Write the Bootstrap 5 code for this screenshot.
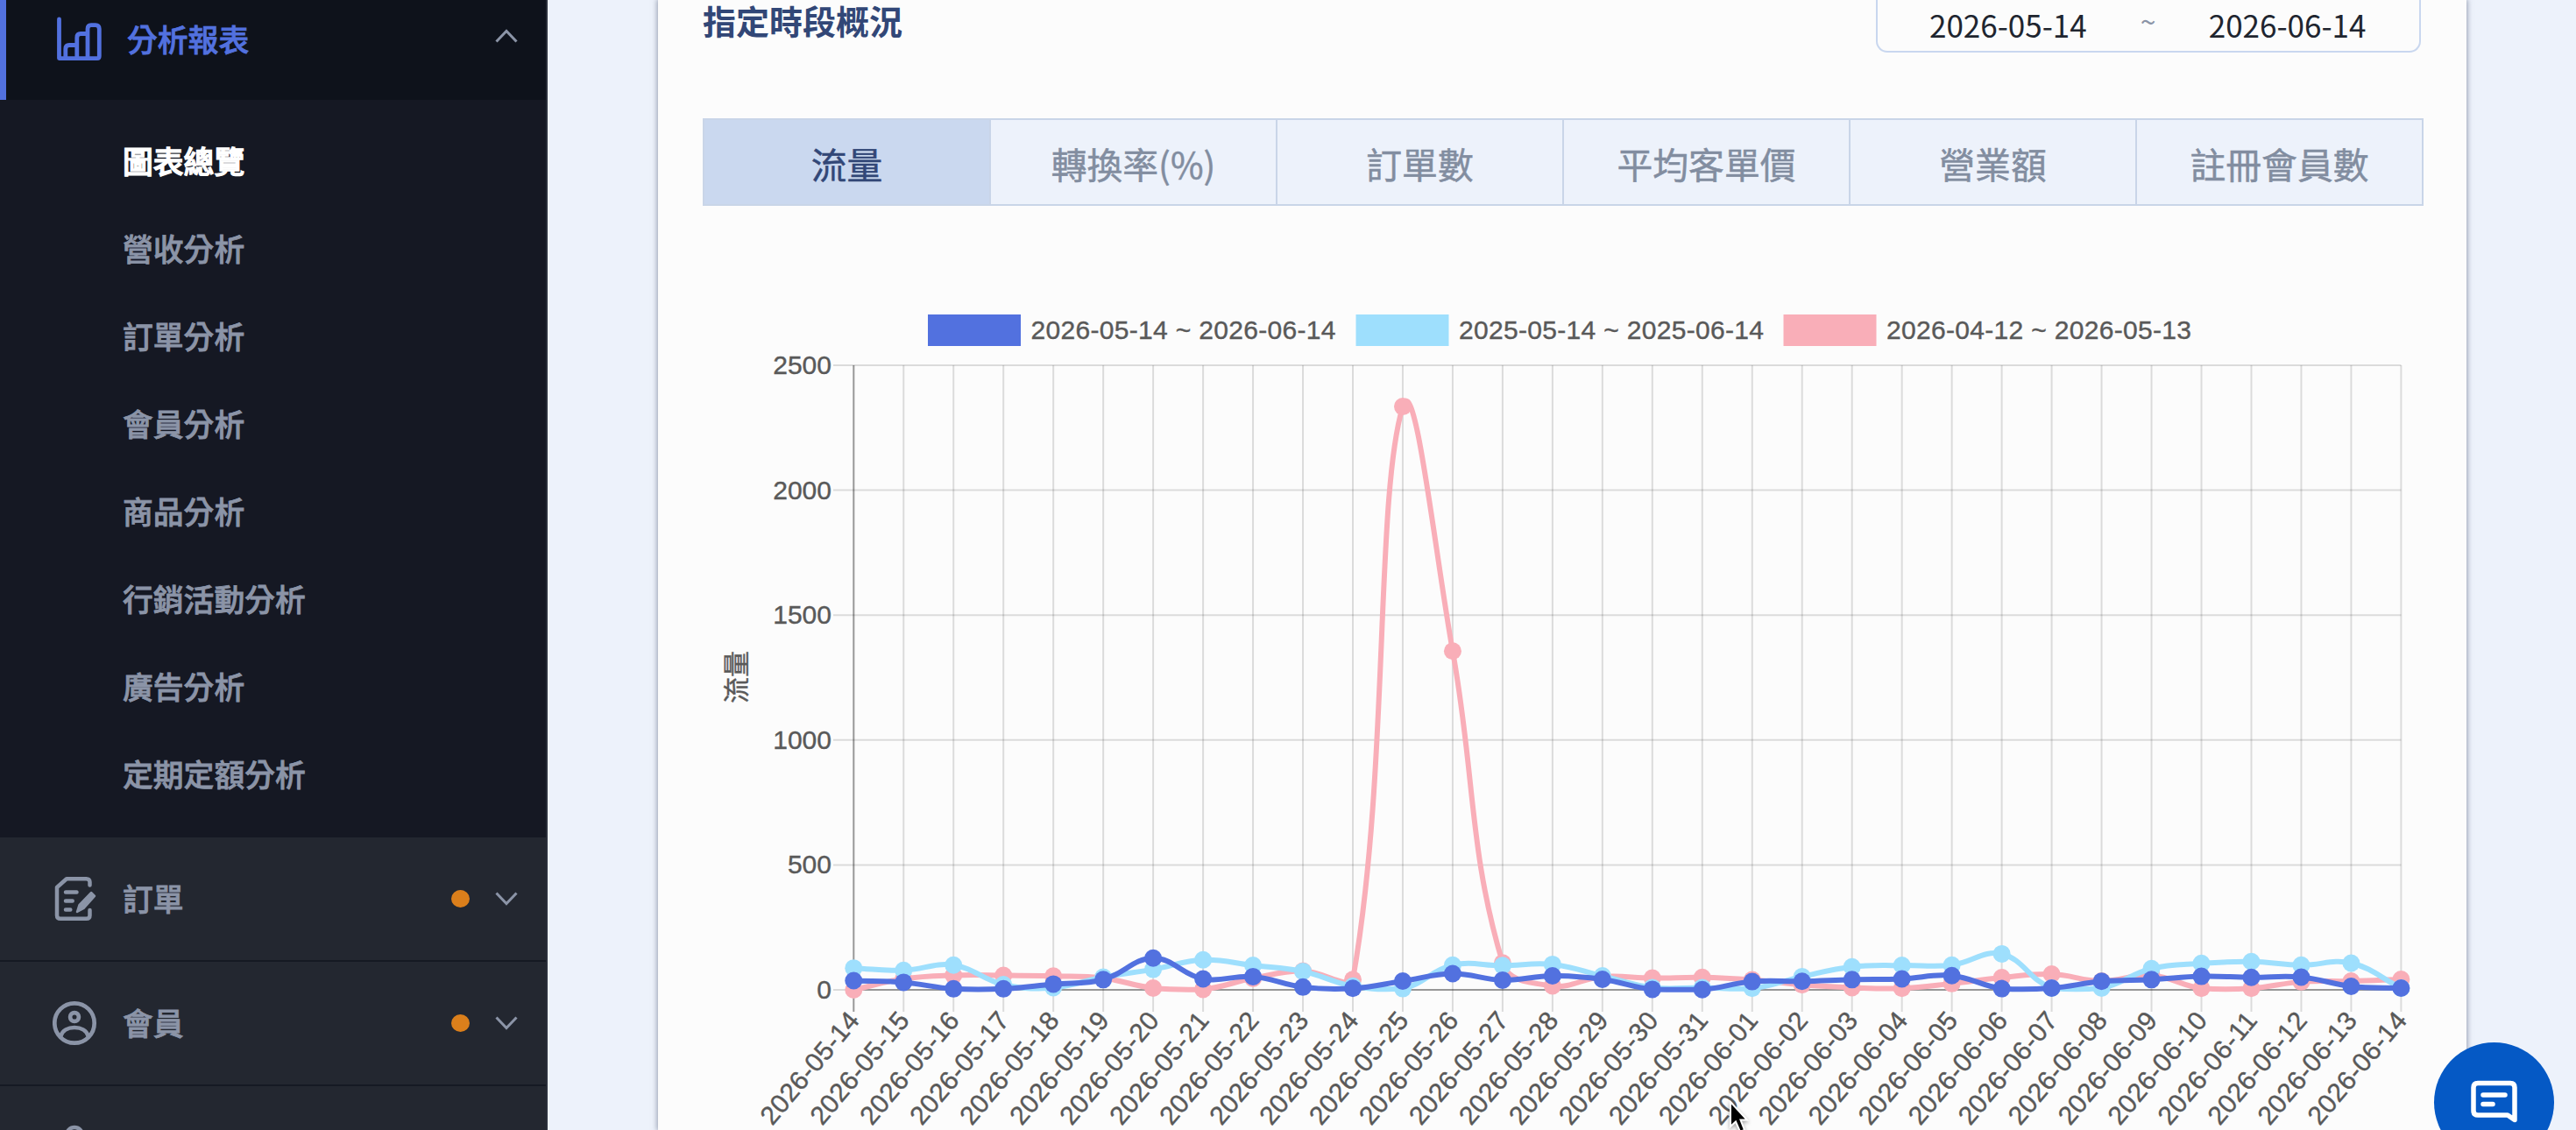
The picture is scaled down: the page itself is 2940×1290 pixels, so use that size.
<!DOCTYPE html>
<html lang="zh-Hant">
<head>
<meta charset="utf-8">
<title>圖表總覽</title>
<link href="https://cdn.jsdelivr.net/npm/bootstrap@5.3.0/dist/css/bootstrap.min.css" rel="stylesheet">
<style>
html,body{height:1290px;overflow:hidden}
body{background:#edf2fb;font-family:"Noto Sans CJK TC","Noto Sans",sans-serif;margin:0}
.app-frame{height:1290px}
.side{width:625px;background:#232730;border-right:2px solid #2b303b;color:#8b94a7;font-size:34.8px;font-weight:500;line-height:50px;-webkit-text-stroke:.8px currentColor}
.side svg{display:block}
.side-open{height:114px;background:#0e121b;border-left:7px solid #5271df;color:#5271df;padding:0 32px 24px 57px}
.side-open .txt{margin-left:29px;padding-bottom:3px}
.side-sub{height:842px;background:#151823;padding:44px 0 0 140px}
.side-sub a{color:#8b94a7;height:50px;margin-bottom:50px;text-decoration:none;display:block}
.side-sub a.on{color:#fff;-webkit-text-stroke-width:1.3px}
.side-item{height:142px;border-bottom:2px solid #151923;padding:0 32px 0 60px}
.side-item.last{padding-top:44px}
.side-item .txt{margin-left:29px;padding-bottom:2px}
.dot{width:21px;height:20px;background:#db7f1b;margin-right:29px}
.panel{margin-left:126px;width:2064px;height:1290px;background:#fcfcfc;box-shadow:0 0 6px 1px rgba(90,100,125,.6);padding:0 49px 0 51px}
.panel-head{height:61px}
.ttl{font-size:38px;font-weight:700;color:#324777;line-height:46px}
.range{width:622px;height:60px;margin-right:3px;border:2px solid #c9d7ef;border-top:0;border-radius:0 0 13px 13px;font-size:35px;color:#20252f;line-height:46px;padding:5px 0 0 59px}
.range .tl{width:139px;color:#8b94a7;font-size:32px;line-height:36px;padding-left:1px}
.tabs6{margin-top:74px;height:100px;border:2px solid #c9d5e8;background:#c9d5e8;gap:2px;font-size:40.8px;color:#828da0;-webkit-text-stroke:.5px currentColor}
.tabs6 div{flex:1 1 0;background:#edf2fb;display:flex;align-items:center;justify-content:center;padding-top:4px}
.tabs6 div.on{background:#cad8ef;color:#324777}
.plot{margin:0 -51px;display:block}
.plot text{font-family:"Liberation Sans",Arial,sans-serif;font-size:30px;fill:#595959;stroke:#595959;stroke-width:.4px}
.plot text.cjk{font-family:"Noto Sans CJK TC",sans-serif}
.chat{right:25px;top:1190px;width:137px;height:137px;background:#0559c5}
.ptr{left:1972px;top:1255px;filter:drop-shadow(0 2px 2px rgba(0,0,0,.35))}
</style>
<script src="https://cdn.jsdelivr.net/npm/bootstrap@5.3.0/dist/js/bootstrap.bundle.min.js"></script>
</head>
<body>
<div class="app-frame d-flex overflow-hidden position-relative">
<nav class="side flex-shrink-0 overflow-hidden">
  <div class="side-open d-flex align-items-center">
    <svg width="52" height="52" viewBox="0 0 52 52" fill="none" stroke="currentColor" stroke-width="4.8" stroke-linejoin="round" stroke-linecap="round"><path d="M3.500 3V47.600H47Q49.300 47.600 49.300 45V14Q49.300 9.600 45 9.600H40Q36 9.600 36 14V47M36 19.500H28Q23.800 19.500 23.800 24V47M23.800 32.500H15Q10.800 32.500 10.800 37V47"/></svg>
    <span class="txt">分析報表</span>
    <svg class="ms-auto mb-2" width="26" height="16" viewBox="0 0 26 16" fill="none" stroke="#8b94a7" stroke-width="3"><path d="M1.500 14.500L13 2.500L24.500 14.500"/></svg>
  </div>
  <div class="side-sub">
    <a class="on">圖表總覽</a><a>營收分析</a><a>訂單分析</a><a>會員分析</a><a>商品分析</a><a>行銷活動分析</a><a>廣告分析</a><a>定期定額分析</a>
  </div>
  <div class="side-item d-flex align-items-center">
    <svg width="51" height="52" viewBox="0 0 51 52" fill="none" stroke="currentColor" stroke-width="4.500" stroke-linecap="round" stroke-linejoin="round"><path d="M42.500 10.500V7Q42.500 3.200 38.500 3.200H16L5 13V45Q5 48.800 9 48.800H38.500Q42.500 48.800 42.500 45V39M15 18.500H27.500M15 28.500H22.700M15 38.500H20.300"/><path d="M28 41L30.500 33L44 19L48 23L35.500 37Z" fill="currentColor" stroke-width="2.500"/></svg>
    <span class="txt">訂單</span><span class="dot rounded-circle ms-auto"></span>
    <svg width="26" height="16" viewBox="0 0 26 16" fill="none" stroke="currentColor" stroke-width="3"><path d="M1.500 1.500L13 13.500L24.500 1.500"/></svg>
  </div>
  <div class="side-item d-flex align-items-center">
    <svg width="51" height="52" viewBox="0 0 51 52" fill="none" stroke="currentColor" stroke-width="4.700"><circle cx="25" cy="26" r="22.700"/><circle cx="25" cy="19" r="4.900"/><path d="M9 41.500C11 34 18 31 25 31S39 34 41 41.500"/></svg>
    <span class="txt">會員</span><span class="dot rounded-circle ms-auto"></span>
    <svg width="26" height="16" viewBox="0 0 26 16" fill="none" stroke="currentColor" stroke-width="3"><path d="M1.500 1.500L13 13.500L24.500 1.500"/></svg>
  </div>
  <div class="side-item last d-flex align-items-start">
    <svg width="51" height="52" viewBox="0 1 51 52" fill="none" stroke="currentColor" stroke-width="4.500"><circle cx="25" cy="13" r="9"/></svg>
  </div>
</nav>
<main class="panel flex-shrink-0">
  <div class="panel-head d-flex justify-content-between">
    <div class="ttl">指定時段概況</div>
    <div class="range d-flex"><span>2026-05-14</span><span class="tl text-center">~</span><span>2026-06-14</span></div>
  </div>
  <div class="tabs6 d-flex"><div class="on">流量</div><div>轉換率(%)</div><div>訂單數</div><div>平均客單價</div><div>營業額</div><div>註冊會員數</div></div>
  <svg class="plot" id="plot" width="2064" height="1055" viewBox="751 235 2064 1055"></svg>
</main>
<div class="chat position-absolute rounded-circle">
  <svg class="d-block" width="137" height="137" viewBox="0 0 137 137" fill="none" stroke="#fff" stroke-width="5.500" stroke-linejoin="round" stroke-linecap="round"><path d="M50 46.500H87Q92 46.500 92 51.500V88.500L84 83H50Q45 83 45 78V51.500Q45 46.500 50 46.500Z"/><path d="M56 60H81M56 70.500H67"/></svg>
</div>
<svg class="ptr position-absolute" width="32" height="48" viewBox="0 0 32 48"><path d="M3 3V31L9 25.500L14 37L19 35L14.500 23.500H22Z" fill="#000" stroke="#fff" stroke-width="2"/></svg>
</div>
<script>
const X0=974.3,DX=56.97,Y0=1130,Y1=417,MAX=2500;
const toY=v=>Y0-v*(Y0-Y1)/MAX;
const series=[
 {c:'#5271df',n:'2026-05-14 ~ 2026-06-14',x:1059,v:[37,30,4,4,23,41,127,44,53,11,6,35,65,39,56,42,2,1,33,34,41,44,57,5,7,34,41,54,50,51,14,7]},
 {c:'#9edffd',n:'2025-05-14 ~ 2025-06-14',x:1547.5,v:[87,78,99,21,9,51,82,120,98,74,15,5,99,97,102,56,9,9,6,53,92,98,99,144,7,7,85,106,113,99,107,7]},
 {c:'#f9aeb8',n:'2026-04-12 ~ 2026-05-13',x:2035.500,v:[0,44,58,58,55,47,7,2,46,75,41,2335,1356,108,16,53,47,50,40,20,9,6,25,49,63,35,58,6,6,32,35,42]}
];
let s='';
const line=(x1,y1,x2,y2,c)=>s+=`<line x1="${x1}" y1="${y1}" x2="${x2}" y2="${y2}" stroke="${c}" stroke-width="2"/>`;
for(let i=0;i<32;i++)line(X0+i*DX,Y1,X0+i*DX,1155,i?'rgba(0,0,0,.13)':'rgba(0,0,0,.4)');
for(let v=0;v<=MAX;v+=500){
  if(v)line(951,toY(v),X0+31*DX,toY(v),'rgba(0,0,0,.13)');
  else{line(951,Y0,X0,Y0,'rgba(0,0,0,.13)');line(X0,Y0,X0+31*DX,Y0,'rgba(0,0,0,.4)');}
  s+=`<text x="949" y="${toY(v)+10}" text-anchor="end">${v}</text>`;
}
for(let i=0;i<32;i++){
  const d=new Date(Date.UTC(2026,4,14+i)).toISOString().slice(0,10);
  s+=`<text transform="translate(${X0+i*DX} 1159) rotate(-50)" y="10.500" text-anchor="end" textLength="157">${d}</text>`;
}
s+=`<text class="cjk" transform="translate(840 773) rotate(-90)" y="11" text-anchor="middle">流量</text>`;
for(const q of series)s+=`<rect x="${q.x}" y="359" width="106" height="36" fill="${q.c}"/><text x="${q.x+117.500}" y="387" textLength="348">${q.n}</text>`;
// Smoothed line: control points weighted by the distance to each neighbour
const clampY=y=>Math.max(Y1,Math.min(Y0,y));
for(const q of [...series].reverse()){
  const p=q.v.map((v,i)=>[X0+i*DX,toY(v)]);
  const cp=p.map((b,i)=>{
    const a=p[i-1]||b,c=p[i+1]||b;
    const l=Math.hypot(b[0]-a[0],b[1]-a[1]),r=Math.hypot(c[0]-b[0],c[1]-b[1]);
    const fa=.4*l/(l+r),fb=.4*r/(l+r);
    return [b[0]-fa*(c[0]-a[0]),clampY(b[1]-fa*(c[1]-a[1])),b[0]+fb*(c[0]-a[0]),clampY(b[1]+fb*(c[1]-a[1]))];
  });
  let d=`M${p[0]}`;
  for(let i=1;i<p.length;i++)d+=`C${cp[i-1][2]} ${cp[i-1][3]} ${cp[i][0]} ${cp[i][1]} ${p[i]}`;
  s+=`<path d="${d}" fill="none" stroke="${q.c}" stroke-width="6"/>`;
  for(const [x,y] of p)s+=`<circle cx="${x}" cy="${y}" r="10" fill="${q.c}"/>`;
}
document.getElementById('plot').innerHTML=s;
</script>
</body>
</html>
